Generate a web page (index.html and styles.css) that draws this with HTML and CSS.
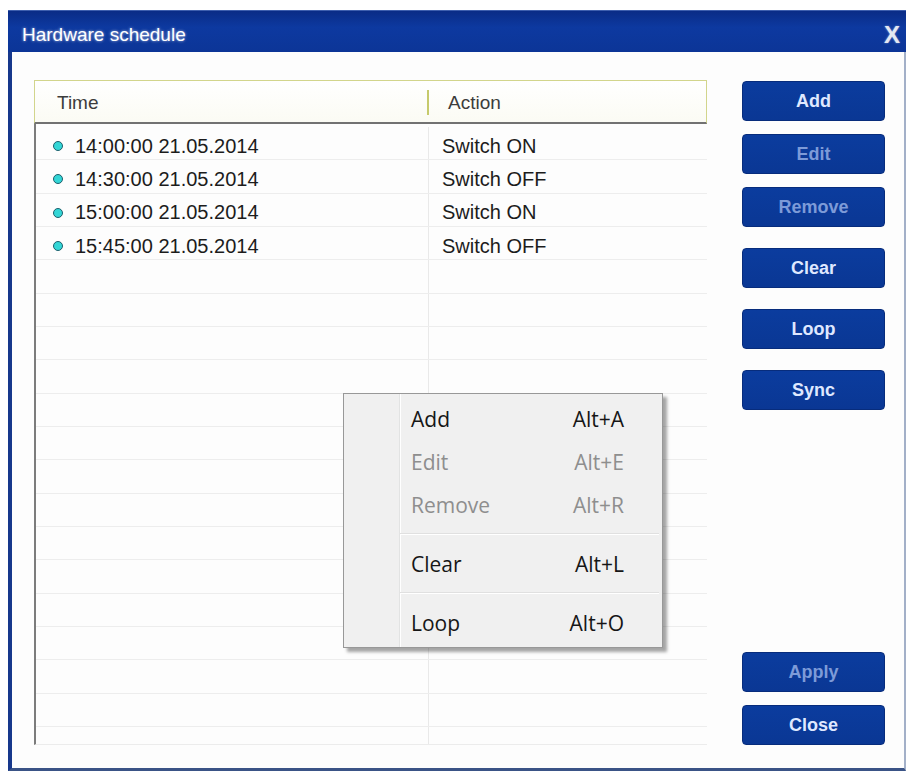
FILE: index.html
```html
<!DOCTYPE html>
<html>
<head>
    <title>Hardware schedule</title>
    <link rel="stylesheet" href="styles.css">
</head>
<body>
    <section class="window">
        <div class="titlebar">
            <span class="title">Hardware schedule</span>
            <span class="close-x">X</span>
        </div>
        <div class="content">
            <div class="list">
                <div class="list-head">
                    <div class="head-time">Time</div>
                    <div class="head-sep"></div>
                    <div class="head-action">Action</div>
                </div>
                <div class="list-body">
                    <div class="row"><div class="cell-time"><i class="dot"></i>14:00:00 21.05.2014</div><div class="cell-action">Switch ON</div></div>
                    <div class="row"><div class="cell-time"><i class="dot"></i>14:30:00 21.05.2014</div><div class="cell-action">Switch OFF</div></div>
                    <div class="row"><div class="cell-time"><i class="dot"></i>15:00:00 21.05.2014</div><div class="cell-action">Switch ON</div></div>
                    <div class="row"><div class="cell-time"><i class="dot"></i>15:45:00 21.05.2014</div><div class="cell-action">Switch OFF</div></div>
                    <div class="row"><div class="cell-time"></div><div class="cell-action"></div></div>
                    <div class="row"><div class="cell-time"></div><div class="cell-action"></div></div>
                    <div class="row"><div class="cell-time"></div><div class="cell-action"></div></div>
                    <div class="row"><div class="cell-time"></div><div class="cell-action"></div></div>
                    <div class="row"><div class="cell-time"></div><div class="cell-action"></div></div>
                    <div class="row"><div class="cell-time"></div><div class="cell-action"></div></div>
                    <div class="row"><div class="cell-time"></div><div class="cell-action"></div></div>
                    <div class="row"><div class="cell-time"></div><div class="cell-action"></div></div>
                    <div class="row"><div class="cell-time"></div><div class="cell-action"></div></div>
                    <div class="row"><div class="cell-time"></div><div class="cell-action"></div></div>
                    <div class="row"><div class="cell-time"></div><div class="cell-action"></div></div>
                    <div class="row"><div class="cell-time"></div><div class="cell-action"></div></div>
                    <div class="row"><div class="cell-time"></div><div class="cell-action"></div></div>
                    <div class="row"><div class="cell-time"></div><div class="cell-action"></div></div>
                    <div class="row"><div class="cell-time"></div><div class="cell-action"></div></div>
                </div>
            </div>
            <div class="side">
                <div class="btn first">Add</div>
                <div class="btn off">Edit</div>
                <div class="btn off">Remove</div>
                <div class="btn wide">Clear</div>
                <div class="btn wide">Loop</div>
                <div class="btn wide">Sync</div>
                <div class="btn off bottom">Apply</div>
                <div class="btn">Close</div>
            </div>
        </div>

        <!-- context menu over the list -->
        <div class="menu">
            <div class="menu-item"><span>Add</span><span>Alt+A</span></div>
            <div class="menu-item off"><span>Edit</span><span>Alt+E</span></div>
            <div class="menu-item off"><span>Remove</span><span>Alt+R</span></div>
            <div class="menu-sep"></div>
            <div class="menu-item"><span>Clear</span><span>Alt+L</span></div>
            <div class="menu-sep"></div>
            <div class="menu-item"><span>Loop</span><span>Alt+O</span></div>
        </div>
    </section>
</body>
</html>
```

FILE: styles.css
```css
    body{
        margin:0;
        background:#fff;
        font-family:"Liberation Sans", Arial, sans-serif;
    }
    .window{
        position:relative;
        width:898px;
        height:761px;
        margin:10px 0 0 8px;
        display:flex;
        flex-direction:column;
    }
    .titlebar{
        flex-shrink:0;
        height:42px;
        box-sizing:border-box;
        display:flex;
        align-items:center;
        justify-content:space-between;
        padding:6px 6px 0 14px;
        background:linear-gradient(#0a2c86, #0d39a0 40%, #0c3597);
        border-top:1px solid #3e5fae;
    }
    .title{
        color:#fff;
        font-size:19px;
        text-shadow:0 0 3px rgba(255,255,255,0.7);
    }
    .close-x{
        color:#e4e8f2;
        font:bold 24px "Liberation Sans", Arial, sans-serif;
        text-shadow:0 0 2px rgba(255,255,255,0.5);
    }
    .content{
        flex:1;
        min-height:0;
        display:flex;
        background:#fdfdfd;
        border-left:4px solid #17388c;
        border-right:2px solid #a3b0c8;
        border-bottom:3px solid #3a5386;
        padding:28px 19px 23px 22px;
        box-shadow:0 2px 0 #cfe0f6;
    }

    /* list */
    .list{
        width:673px;
        min-height:0;
        display:flex;
        flex-direction:column;
    }
    .list-head{
        flex-shrink:0;
        height:44px;
        box-sizing:border-box;
        display:flex;
        align-items:center;
        border:1px solid #d2d58c;
        border-bottom:2px solid #727272;
        background:linear-gradient(#fff, #fbfbf4);
        color:#3c3c3c;
        font-size:19px;
    }
    .head-time{
        width:370px;
        padding-left:22px;
        padding-top:3px;
    }
    .head-sep{
        width:2px;
        height:25px;
        background:#c6ca6c;
        margin-top:2px;
    }
    .head-action{
        padding-left:19px;
        padding-top:3px;
    }
    .list-body{
        flex:1;
        min-height:0;
        overflow:hidden;
        border-left:2px solid #7c7c7c;
        border-bottom:1px solid #ececec;
        padding-top:3px;
    }
    .row{
        height:33.33px;
        box-sizing:border-box;
        display:flex;
        border-bottom:1px solid #ededed;
        font-size:20px;
        color:#1c1c1c;
    }
    .cell-time{
        width:375px;
        padding-left:17px;
        border-right:1px solid #e9e9e9;
        display:flex;
        align-items:center;
        padding-top:6px;
    }
    .cell-action{
        padding-left:13px;
        display:flex;
        align-items:center;
        padding-top:6px;
    }
    .dot{
        width:8px;
        height:8px;
        border-radius:50%;
        background:#33d6d6;
        border:1px solid #1d5f6c;
        margin-right:12px;
    }

    /* buttons */
    .side{
        width:143px;
        margin-left:35px;
        display:flex;
        flex-direction:column;
    }
    .btn{
        flex-shrink:0;
        height:40px;
        box-sizing:border-box;
        margin-top:13px;
        display:flex;
        align-items:center;
        justify-content:center;
        border-radius:4px;
        border:1px solid #072c7c;
        background:linear-gradient(#0b3c9e, #0a3794);
        color:#dfe8ff;
        font:bold 18px "Liberation Sans", Arial, sans-serif;
    }
    .btn.first{
        margin-top:1px;
    }
    .btn.wide{
        margin-top:21px;
    }
    .btn.off{
        color:#7d9bd8;
    }
    .btn.bottom{
        margin-top:auto;
    }

    /* context menu */
    .menu{
        position:absolute;
        left:335px;
        top:383px;
        width:320px;
        box-sizing:border-box;
        padding:3px 0;
        border:1px solid #989898;
        background:linear-gradient(to right, #f0f0f0 55px, #e2e3e3 55px, #e2e3e3 56px, #fff 56px, #fff 57px, #f0f0f0 57px);
        box-shadow:4px 4px 3px rgba(0,0,0,0.35);
        font:21px "Open Sans", sans-serif;
        color:#161616;
    }
    .menu-item{
        height:43px;
        display:flex;
        align-items:center;
        justify-content:space-between;
        padding:0 38px 0 67px;
    }
    .menu-item.off{
        color:#8e8e8e;
    }
    .menu-sep{
        height:1px;
        margin:7px 3px 7px 56px;
        background:#e0e0e0;
        border-bottom:1px solid #fff;
    }
```
